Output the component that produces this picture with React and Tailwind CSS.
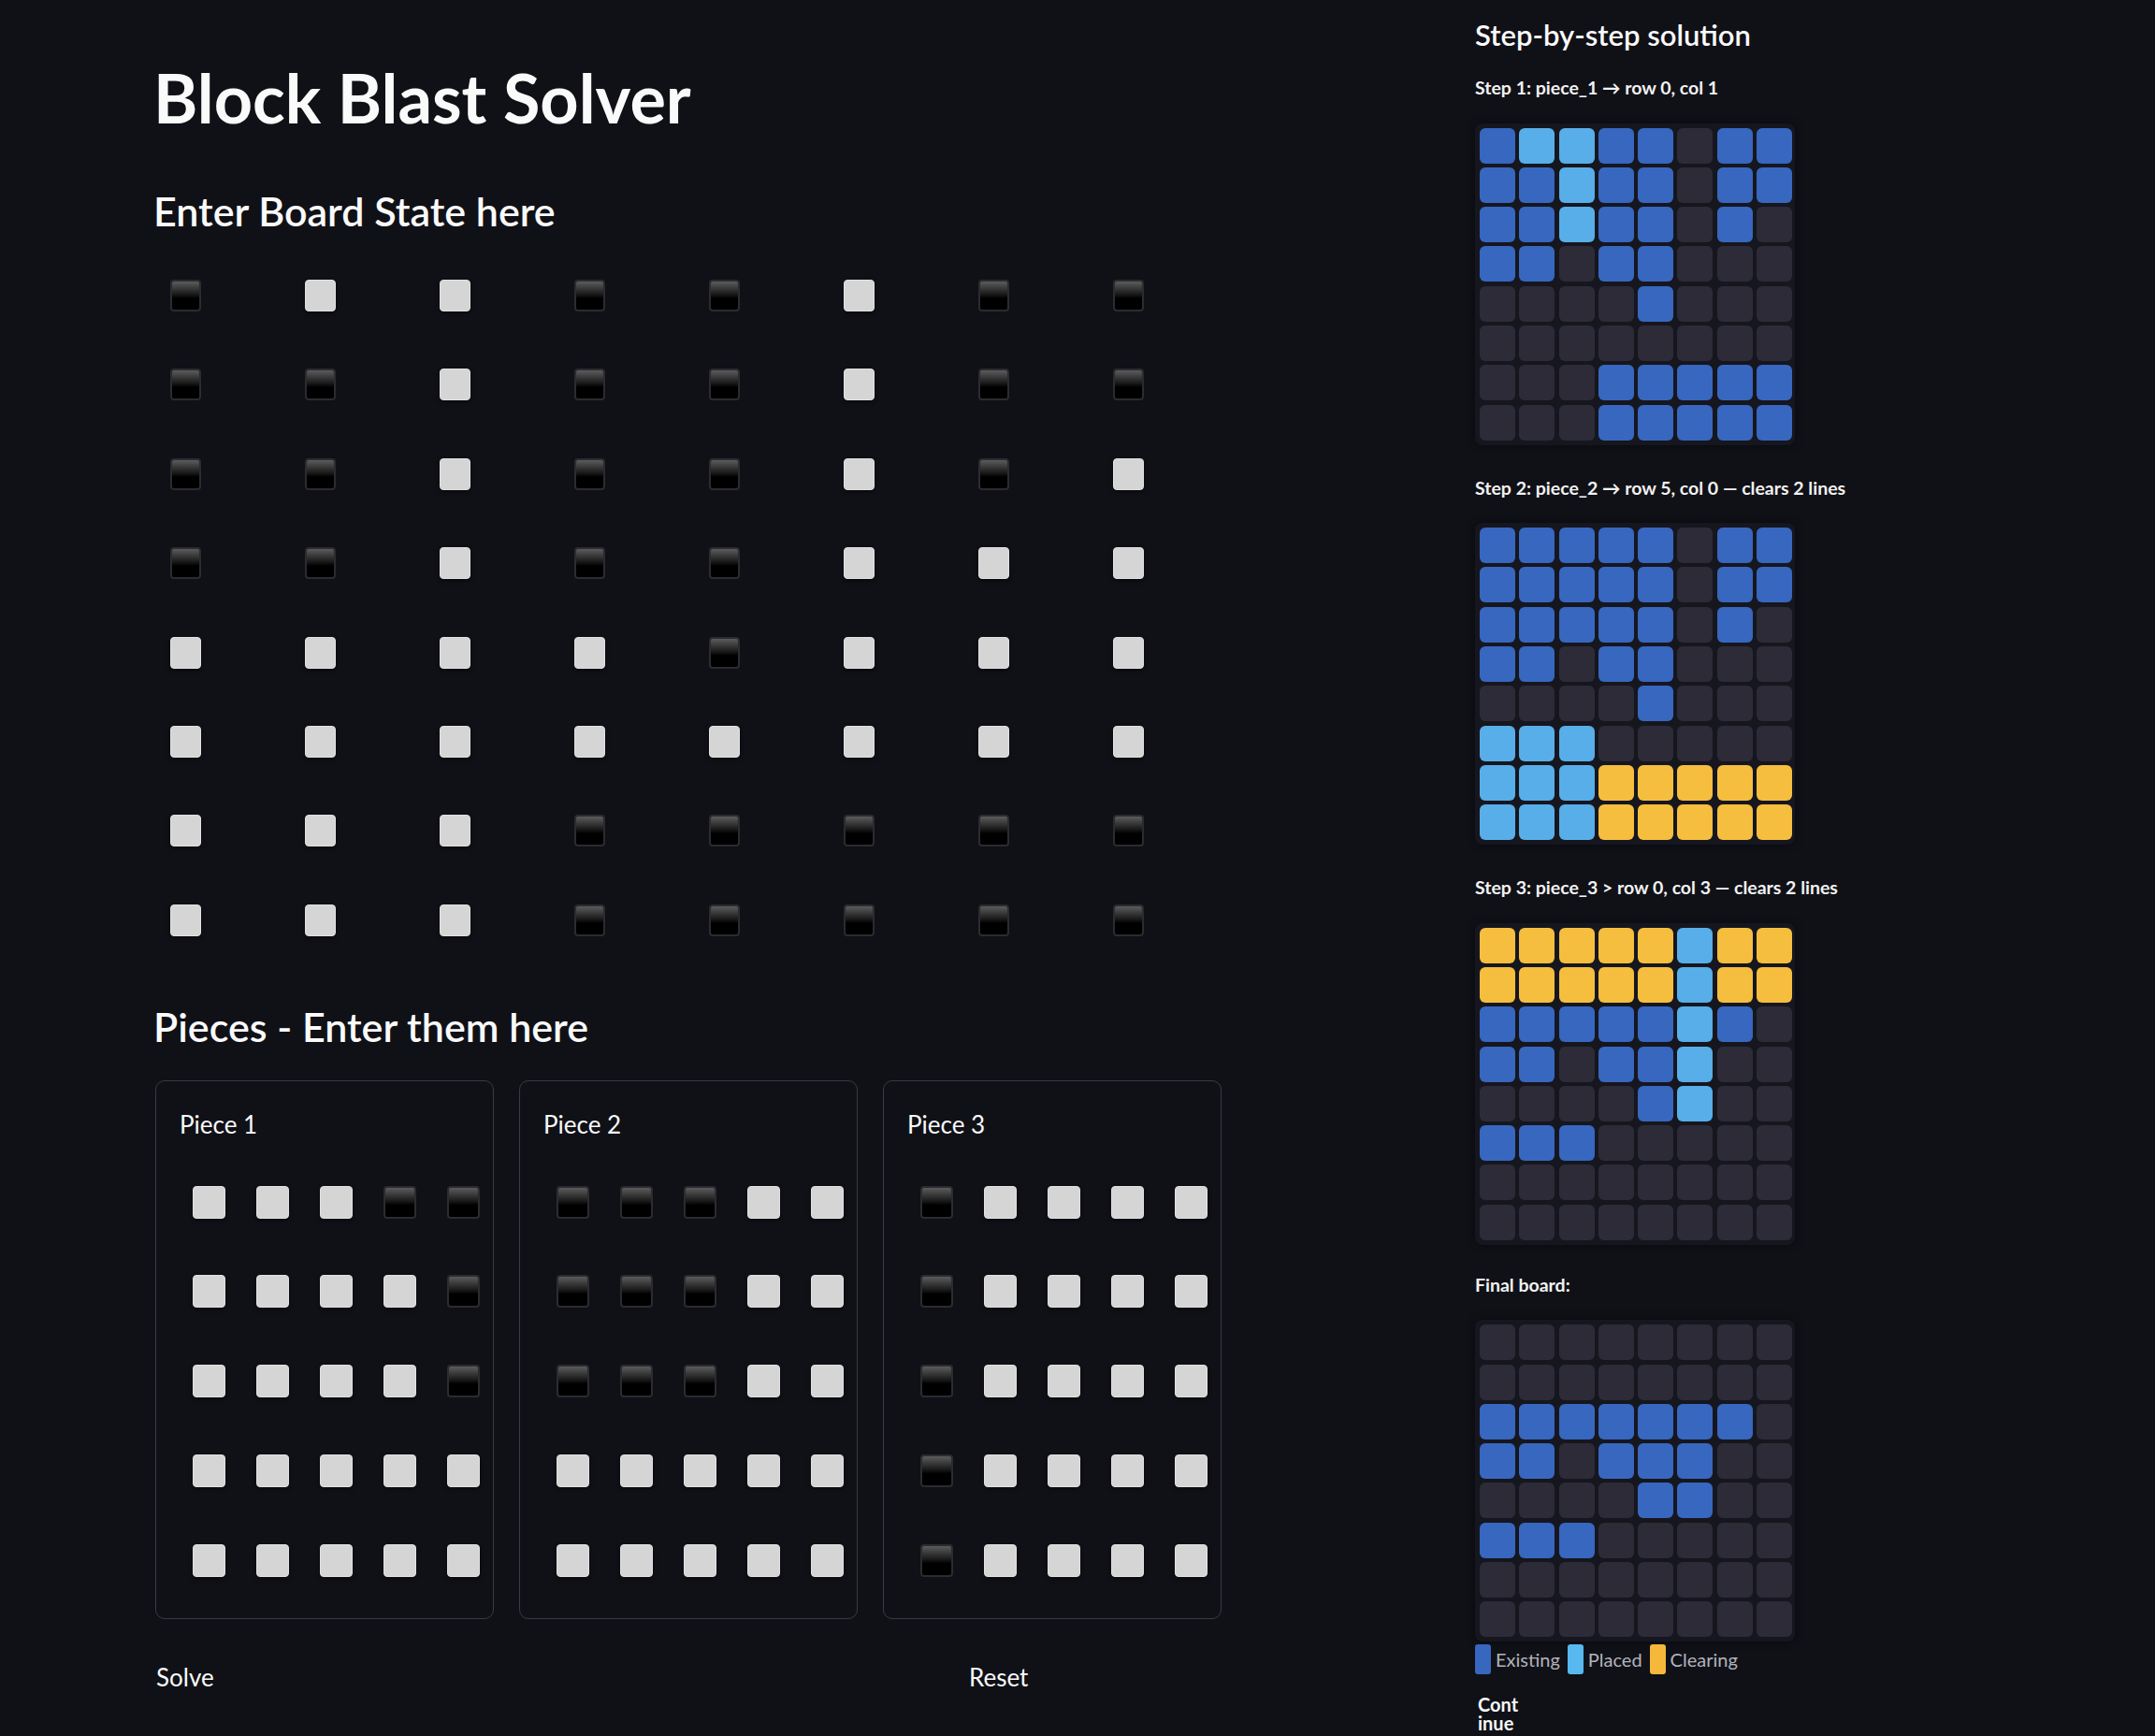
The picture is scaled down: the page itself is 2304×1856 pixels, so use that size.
import React, { useState } from 'react';

const BOARD = [
  '01100100',
  '00100100',
  '00100101',
  '00100111',
  '11110111',
  '11111111',
  '11100000',
  '11100000',
];

const PIECES = [
  ['11100', '11110', '11110', '11111', '11111'],
  ['00011', '00011', '00011', '11111', '11111'],
  ['01111', '01111', '01111', '01111', '01111'],
];

// E = existing, P = placed, C = clearing, . = empty
const STEPS = [
  {
    label: 'Step 1: piece_1 → row 0, col 1',
    grid: ['EPPEE.EE', 'EEPEE.EE', 'EEPEE.E.', 'EE.EE...', '....E...', '........', '...EEEEE', '...EEEEE'],
  },
  {
    label: 'Step 2: piece_2 → row 5, col 0 — clears 2 lines',
    grid: ['EEEEE.EE', 'EEEEE.EE', 'EEEEE.E.', 'EE.EE...', '....E...', 'PPP.....', 'PPPCCCCC', 'PPPCCCCC'],
  },
  {
    label: 'Step 3: piece_3 > row 0, col 3 — clears 2 lines',
    grid: ['CCCCCPCC', 'CCCCCPCC', 'EEEEEPE.', 'EE.EEP..', '....EP..', 'EEE.....', '........', '........'],
  },
];

const FINAL = ['........', '........', 'EEEEEEE.', 'EE.EEE..', '....EE..', 'EEE.....', '........', '........'];

const toBools = (rows) => rows.map((r) => r.split('').map((c) => c === '1'));

const cellColor = {
  E: 'bg-[#3767bf]',
  P: 'bg-[#58aee8]',
  C: 'bg-[#f5be3e]',
  '.': 'bg-[#2c2b37]',
};

const Checkbox = ({ checked, onChange, size }) => (
  <button
    type="button"
    onClick={onChange}
    className={`${size} rounded-[4px] ${
      checked
        ? 'bg-[#d5d5d5] border border-[#e1e1e1] shadow-[0_2px_4px_rgba(0,0,0,0.5)]'
        : 'border-2 border-[#2b2b30] bg-[linear-gradient(180deg,#5c5c5c_0%,#1a1a1a_45%,#000_60%,#000_100%)]'
    }`}
  />
);

const MiniBoard = ({ grid }) => (
  <div className="w-[342px] rounded-[8px] bg-[#16161f] p-[5px] shadow-[0_0_10px_rgba(0,0,0,0.45)] grid grid-cols-[repeat(8,38px)] gap-[4.3px]">
    {grid.join('').split('').map((c, i) => (
      <div key={i} className={`h-[38px] w-[38px] rounded-[6px] ${cellColor[c]}`} />
    ))}
  </div>
);

export default function App() {
  const [board, setBoard] = useState(toBools(BOARD));
  const [pieces, setPieces] = useState(PIECES.map(toBools));

  const toggleBoard = (r, c) => {
    setBoard((b) => b.map((row, ri) => row.map((v, ci) => (ri === r && ci === c ? !v : v))));
  };

  const togglePiece = (p, r, c) => {
    setPieces((ps) =>
      ps.map((piece, pi) =>
        pi !== p ? piece : piece.map((row, ri) => row.map((v, ci) => (ri === r && ci === c ? !v : v)))
      )
    );
  };

  return (
    <div className="h-[1856px] w-full overflow-hidden bg-[#101117] text-[#fafafa] flex font-['Lato','Noto_Sans',sans-serif]">
      {/* Left column: inputs */}
      <div className="w-[1577px] shrink-0 pl-[164px] pt-[68px]">
        <h1 className="text-[72px] leading-none font-bold">Block Blast Solver</h1>

        <h3 className="mt-[64px] text-[43px] leading-none font-semibold">Enter Board State here</h3>

        <div className="mt-[52px] pl-[18px] flex flex-col gap-y-[61.4px]">
          {board.map((row, r) => (
            <div key={r} className="grid grid-cols-[repeat(8,144px)] h-[34px]">
              {row.map((v, c) => (
                <Checkbox key={c} checked={v} onChange={() => toggleBoard(r, c)} size="h-[34px] w-[33px]" />
              ))}
            </div>
          ))}
        </div>

        <h3 className="mt-[75px] text-[43px] leading-none font-semibold">Pieces - Enter them here</h3>

        <div className="mt-[36px] ml-[2px] flex gap-[27px]">
          {pieces.map((piece, p) => (
            <div
              key={p}
              className="w-[362px] h-[576px] rounded-[10px] border-[1.5px] border-[#3a3b42] pt-[33px] pl-[39px]"
            >
              <div className="-ml-[14px] text-[26px] leading-none">Piece {p + 1}</div>
              <div className="mt-[53px] flex flex-col gap-y-[60.75px]">
                {piece.map((row, r) => (
                  <div key={r} className="grid grid-cols-[repeat(5,68px)] h-[35px]">
                    {row.map((v, c) => (
                      <Checkbox key={c} checked={v} onChange={() => togglePiece(p, r, c)} size="h-[35px] w-[35px]" />
                    ))}
                  </div>
                ))}
              </div>
            </div>
          ))}
        </div>

        <div className="mt-[49px] ml-[2px] flex text-[26px] leading-none">
          <button type="button" className="w-[870px] text-left pl-[1px]">Solve</button>
          <button type="button" className="text-left">Reset</button>
        </div>
      </div>

      {/* Right column: solution */}
      <div className="flex-1 pt-[22px]">
        <h2 className="text-[31px] leading-none font-semibold">Step-by-step solution</h2>

        <div className="mt-[31px] flex flex-col">
          {STEPS.map((s, i) => (
            <div key={i} className="mb-[36px]">
              <div className="text-[19.5px] leading-none font-bold text-[#f2f2f2]">{s.label}</div>
              <div className="mt-[28px]">
                <MiniBoard grid={s.grid} />
              </div>
            </div>
          ))}

          <div className="-mt-[3px] text-[19.5px] leading-none font-bold text-[#f2f2f2]">Final board:</div>
          <div className="mt-[28px]">
            <MiniBoard grid={FINAL} />
          </div>

          <div className="mt-[3px] flex items-center text-[20px] text-[#b3b3bb]">
            <span className="h-[32px] w-[17px] rounded-[3px] bg-[#3767bf]" />
            <span className="ml-[5px] mr-[8px]">Existing</span>
            <span className="h-[32px] w-[17px] rounded-[3px] bg-[#58b8f0]" />
            <span className="ml-[5px] mr-[8px]">Placed</span>
            <span className="h-[32px] w-[17px] rounded-[3px] bg-[#f5b83a]" />
            <span className="ml-[5px]">Clearing</span>
          </div>

          <button
            type="button"
            className="mt-[22px] ml-[3px] w-[50px] text-left text-[20px] leading-[20px] font-bold text-[#f7f7f7]"
          >
            Cont
            <br />
            inue
          </button>
        </div>
      </div>
    </div>
  );
}
